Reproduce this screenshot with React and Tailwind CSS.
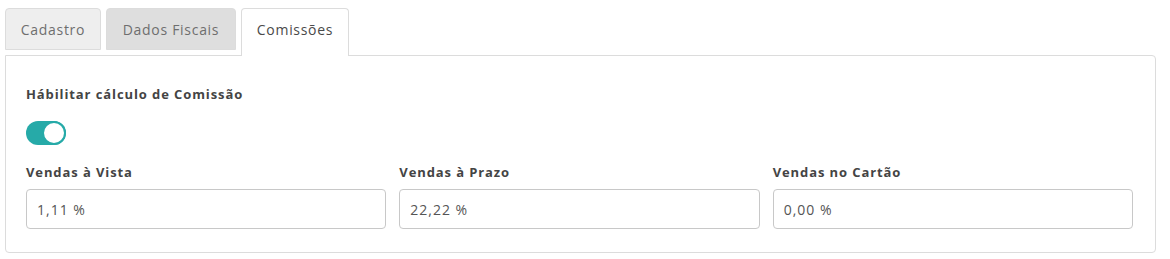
export default function App() {
  const fields = [
    { label: "Vendas à Vista", value: "1,11 %" },
    { label: "Vendas à Prazo", value: "22,22 %" },
    { label: "Vendas no Cartão", value: "0,00 %" },
  ];
  return (
    <div className="w-[1170px] h-[259px] bg-white pt-[8px] pl-[5px]" style={{ fontFamily: '"Open Sans", "Liberation Sans", sans-serif' }}>
      <div className="w-[1151px]">
        <div className="flex gap-[5px] relative z-10">
          <div className="w-[96px] h-[42px] flex items-center justify-center border border-[#dcdcdc] rounded-t-[4px] bg-[#eeeeee] text-[14px] tracking-[0.7px] text-[#6e6e6e]">Cadastro</div>
          <div className="w-[130px] h-[42px] flex items-center justify-center border border-[#dcdcdc] rounded-t-[4px] bg-[#dedede] text-[14px] tracking-[0.7px] text-[#6e6e6e]">Dados Fiscais</div>
          <div className="w-[108px] h-[48px] flex items-center justify-center border border-b-0 border-[#dcdcdc] rounded-t-[4px] bg-white text-[14px] tracking-[0.7px] text-[#4a4a4a] pb-[6px]">Comissões</div>
        </div>
        <div className="-mt-[1px] border border-[#dcdcdc] rounded-b-[4px] rounded-tr-[4px] pl-[20px] pr-[22px] pt-[29px] pb-[23px]">
          <div className="text-[13px] font-bold tracking-[0.9px] text-[#444] leading-[18px]">Hábilitar cálculo de Comissão</div>
          <div className="mt-[18px] w-[40px] h-[24px] rounded-full bg-[#26aaa8] relative">
            <div className="absolute right-0 top-0 w-[24px] h-[24px] rounded-full bg-white border-2 border-[#26aaa8]"></div>
          </div>
          <div className="grid grid-cols-3 gap-[13px] mt-[18px]">
            {fields.map((f) => (
              <div key={f.label}>
                <div className="text-[13px] font-bold tracking-[0.9px] text-[#444] leading-[18px]">{f.label}</div>
                <div className="mt-[8px] h-[40px] border border-[#c8c8c8] rounded-[4px] flex items-center px-[10px] text-[14px] tracking-[1px] text-[#555]">{f.value}</div>
              </div>
            ))}
          </div>
        </div>
      </div>
    </div>
  );
}
